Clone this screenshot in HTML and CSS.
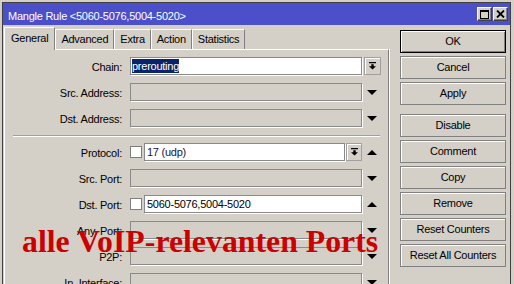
FILE: index.html
```html
<!DOCTYPE html>
<html>
<head>
<meta charset="utf-8">
<title>Mangle Rule</title>
<link rel="stylesheet" href="styles.css">
</head>
<body>
<div class="window">
  <div class="titlebar">
    <span class="title">Mangle Rule &lt;5060-5076,5004-5020&gt;</span>
    <span class="tbtns">
      <span class="tbtn"><svg width="9" height="9" viewBox="0 0 9 9"><path d="M0 0h9v9H0z M1 2v6h7V2z" fill="#000" fill-rule="evenodd"/></svg></span>
      <span class="tbtn"><svg width="9" height="8" viewBox="0 0 9 8"><path d="M1 0.5l7 7M8 0.5l-7 7" stroke="#000" stroke-width="1.8"/></svg></span>
    </span>
  </div>
  <div class="content">
    <div class="left">
      <div class="tabs">
        <div class="tab active">General</div>
        <div class="tab">Advanced</div>
        <div class="tab">Extra</div>
        <div class="tab">Action</div>
        <div class="tab">Statistics</div>
      </div>
      <div class="panel">
        <div class="row">
          <span class="lbl">Chain:</span>
          <span class="field sel w-full"><span class="hl">prerouting</span></span>
          <span class="ddbtn"><svg width="7" height="8" viewBox="0 0 7 8"><path d="M0 0h7v1.2H0z M2.3 2.2h2.4v2H7L3.5 7.5 0 4.2h2.3z" fill="#000"/></svg></span>
        </div>
        <div class="row">
          <span class="lbl">Src. Address:</span>
          <span class="field dis w-full"></span>
          <span class="arr"><svg width="10" height="5" viewBox="0 0 10 5"><path d="M0 0h10L5 5z" fill="#000"/></svg></span>
        </div>
        <div class="row">
          <span class="lbl">Dst. Address:</span>
          <span class="field dis w-full"></span>
          <span class="arr"><svg width="10" height="5" viewBox="0 0 10 5"><path d="M0 0h10L5 5z" fill="#000"/></svg></span>
        </div>
        <div class="sep"></div>
        <div class="row">
          <span class="lbl">Protocol:</span>
          <span class="cb"></span>
          <span class="field w-short proto">17 (udp)</span>
          <span class="ddbtn small"><svg width="7" height="8" viewBox="0 0 7 8"><path d="M0 0h7v1.2H0z M2.3 2.2h2.4v2H7L3.5 7.5 0 4.2h2.3z" fill="#000"/></svg></span>
          <span class="arr up"><svg width="10" height="5" viewBox="0 0 10 5"><path d="M0 5h10L5 0z" fill="#000"/></svg></span>
        </div>
        <div class="row">
          <span class="lbl">Src. Port:</span>
          <span class="field dis w-full"></span>
          <span class="arr"><svg width="10" height="5" viewBox="0 0 10 5"><path d="M0 0h10L5 5z" fill="#000"/></svg></span>
        </div>
        <div class="row">
          <span class="lbl">Dst. Port:</span>
          <span class="cb"></span>
          <span class="field w-mid">5060-5076,5004-5020</span>
          <span class="arr up"><svg width="10" height="5" viewBox="0 0 10 5"><path d="M0 5h10L5 0z" fill="#000"/></svg></span>
        </div>
        <div class="row">
          <span class="lbl">Any. Port:</span>
          <span class="field dis w-full"></span>
          <span class="arr"><svg width="10" height="5" viewBox="0 0 10 5"><path d="M0 0h10L5 5z" fill="#000"/></svg></span>
        </div>
        <div class="row">
          <span class="lbl">P2P:</span>
          <span class="field dis w-full"></span>
          <span class="arr"><svg width="10" height="5" viewBox="0 0 10 5"><path d="M0 0h10L5 5z" fill="#000"/></svg></span>
        </div>
        <div class="row">
          <span class="lbl">In. Interface:</span>
          <span class="field dis w-full"></span>
          <span class="arr"><svg width="10" height="5" viewBox="0 0 10 5"><path d="M0 0h10L5 5z" fill="#000"/></svg></span>
        </div>
      </div>
    </div>
    <div class="buttons">
      <div class="btn def">OK</div>
      <div class="btn">Cancel</div>
      <div class="btn gap">Apply</div>
      <div class="btn">Disable</div>
      <div class="btn">Comment</div>
      <div class="btn">Copy</div>
      <div class="btn">Remove</div>
      <div class="btn">Reset Counters</div>
      <div class="btn">Reset All Counters</div>
    </div>
  </div>
</div>
<div class="annot">alle VoIP-relevanten Ports</div>
</body>
</html>
```
FILE: styles.css
```css
* { box-sizing: border-box; }
html, body { margin: 0; padding: 0; }
body {
  position: relative;
  width: 514px;
  height: 284px;
  overflow: hidden;
  background: #d4d0c8;
  font-family: "Liberation Sans", Arial, sans-serif;
  font-size: 11px;
  letter-spacing: -0.25px;
  color: #000;
}
.window {
  margin: 2px 0 0 2px;
  width: 509px;
  height: 284px;
  overflow: hidden;
  border: 1px solid #404040;
  background: #d4d0c8;
}
.titlebar {
  height: 22px;
  background: #4b4fca;
  display: flex;
  align-items: flex-start;
  padding-left: 5px;
  color: #fff;
}
.title { padding-top: 7px; line-height: 13px; white-space: nowrap; }
.tbtns { margin-left: auto; margin-top: 4px; margin-right: 2px; display: flex; gap: 1px; }
.tbtn {
  width: 15px;
  height: 14px;
  background: #d4d0c8;
  border: 1px solid;
  border-color: #fff #404040 #404040 #fff;
  box-shadow: inset -1px -1px 0 #808080;
  display: flex;
  align-items: center;
  justify-content: center;
}
.content { display: flex; padding: 2px 0 0 1px; }
.left { width: 385px; }
.tabs { display: flex; align-items: flex-end; height: 22px; }
.tab {
  height: 20px;
  line-height: 19px;
  padding: 0 5px;
  border-top: 1px solid #fff;
  border-left: 1px solid #fff;
  border-right: 1px solid #808080;
  white-space: nowrap;
}
.tab.active {
  height: 23px;
  line-height: 21px;
  padding: 0 6px 1px;
  margin-bottom: -1px;
  position: relative;
  z-index: 1;
  background: #d4d0c8;
}
.panel {
  border-top: 1px solid #fff;
  border-left: 1px solid #fff;
  border-right: 1px solid #808080;
  box-shadow: 1px 0 0 #fff;
  height: 250px;
  padding-top: 7px;
}
.row { display: flex; height: 18px; margin-bottom: 8px; }
.lbl {
  width: 117px;
  margin-right: 8px;
  text-align: right;
  line-height: 20px;
  white-space: nowrap;
}
.field {
  height: 18px;
  border: 1px solid #8a8a8a;
  box-shadow: 1px 1px 0 #fff;
  background: #fff;
  line-height: 16px;
  padding-left: 2px;
  white-space: nowrap;
  overflow: hidden;
}
.field.dis { background: #d4d0c8; }
.field.sel { padding-left: 1px; }
.w-full { width: 232px; }
.w-mid { width: 218px; }
.w-short { width: 201px; }
.proto { color: #201040; }
.hl {
  display: inline-block;
  line-height: 14px;
  background: #0a246a;
  color: #fff;
}
.ddbtn {
  width: 17px;
  height: 18px;
  margin-left: 2px;
  border: 1px solid #a0a0a0;
  box-shadow: inset 1px 1px 0 #fff;
  display: flex;
  align-items: center;
  justify-content: center;
}
.ddbtn.small { width: 16px; margin-left: 1px; }
.arr { width: 20px; display: flex; align-items: center; justify-content: center; }
.cb {
  width: 12px;
  height: 12px;
  margin: 3px 2px 0 0;
  border: 1px solid #808080;
  background: #fff;
}
.sep {
  margin: 2px 8px 6px 8px;
  height: 2px;
  border-top: 1px solid #a0a0a0;
  border-bottom: 1px solid #fff;
}
.buttons {
  margin-left: 11px;
  width: 106px;
  padding-top: 3px;
  display: flex;
  flex-direction: column;
}
.btn {
  height: 23px;
  margin-bottom: 3px;
  border: 1px solid #808080;
  box-shadow: inset 1px 1px 0 #fff;
  text-align: center;
  line-height: 21px;
  white-space: nowrap;
}
.btn.def {
  border-color: #000;
  box-shadow: inset 1px 1px 0 #fff, inset -1px -1px 0 #808080;
}
.btn.gap { margin-bottom: 9px; }
.annot {
  position: absolute;
  left: 22px;
  top: 226px;
  font-family: "Liberation Serif", "Times New Roman", serif;
  font-weight: bold;
  font-size: 31.8px;
  line-height: 32px;
  letter-spacing: 0;
  color: #cc0000;
  white-space: nowrap;
}
```
